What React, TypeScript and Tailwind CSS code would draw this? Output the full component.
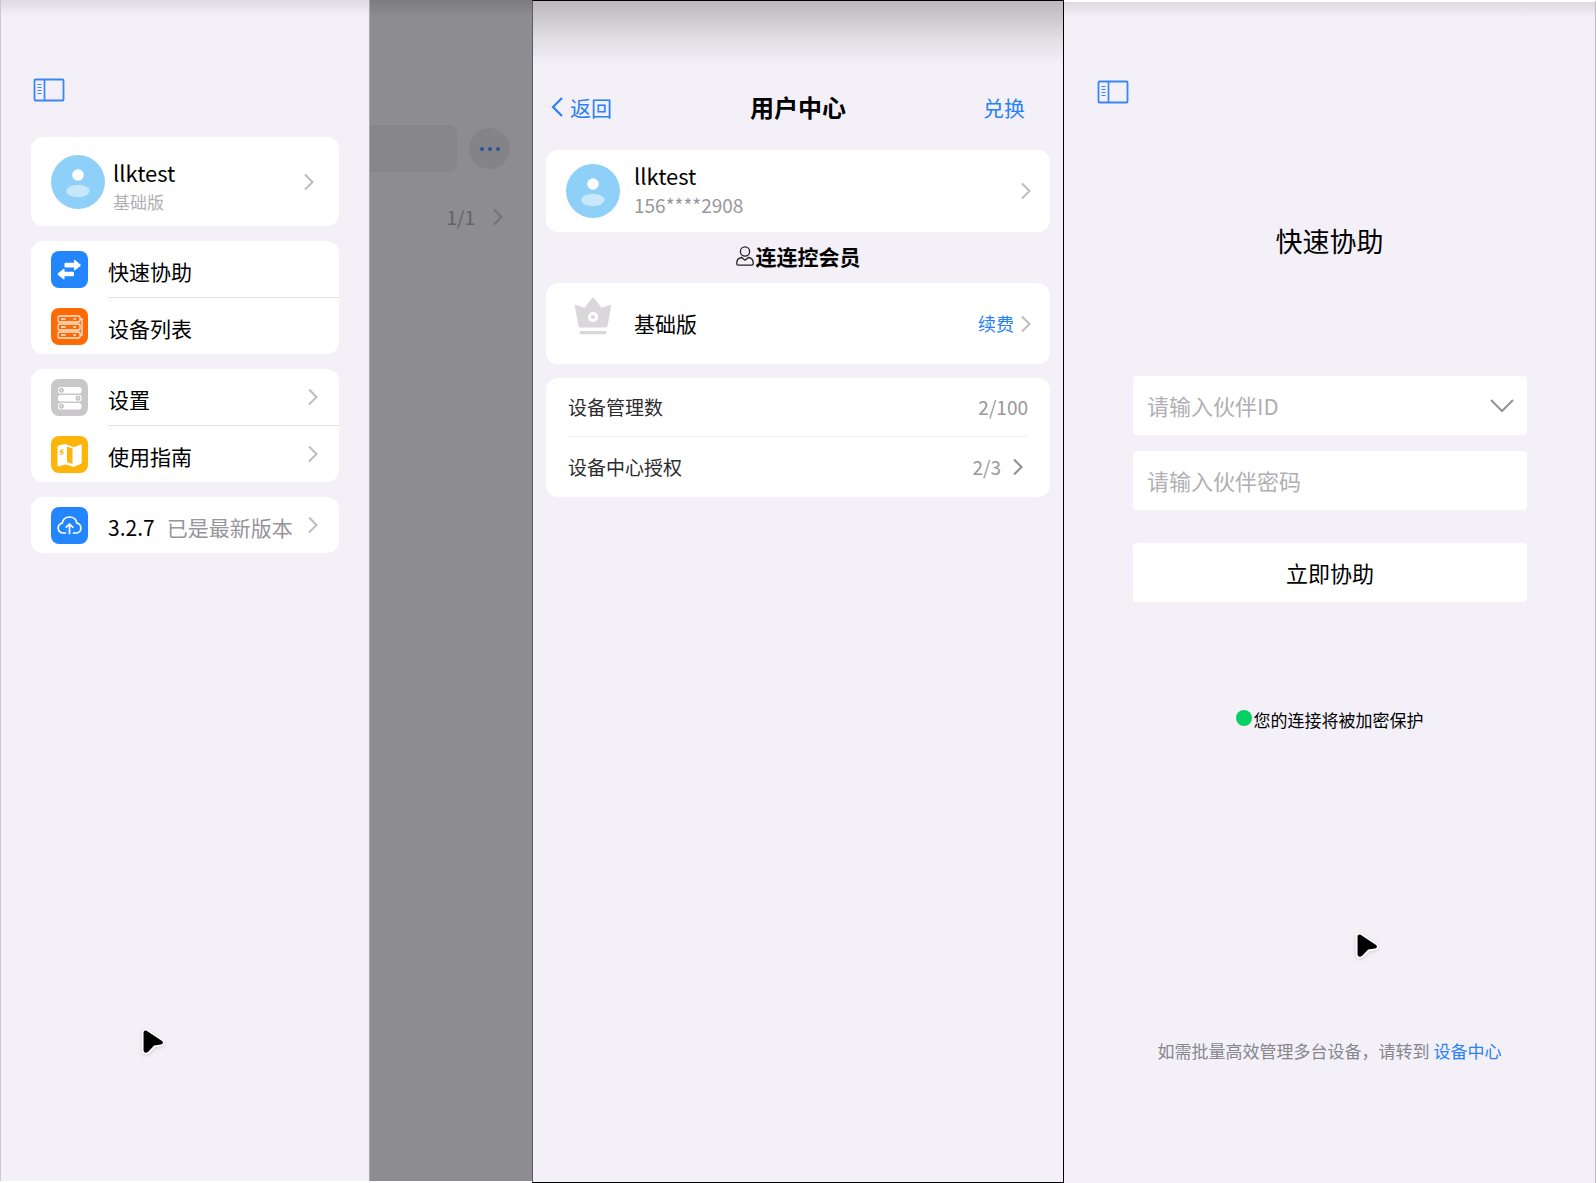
import type { ReactNode } from 'react';

function ChevronRight({ className = 'text-[#bcbbbf]' }: { className?: string }) {
  return (
    <svg className={`h-[18px] w-[12px] shrink-0 ${className}`} viewBox="0 0 12 18" fill="none" stroke="currentColor" strokeWidth="2" aria-hidden="true">
      <path d="M2 1.5 L9.5 9 L2 16.5" />
    </svg>
  );
}

function SidebarIcon() {
  return (
    <svg className="h-[24px] w-[32px]" viewBox="0 0 32 24" fill="none" stroke="#3a86f5" aria-hidden="true">
      <rect x="1.5" y="1.5" width="29" height="21" rx="1" strokeWidth="1.8" />
      <path d="M11.5 2v20" strokeWidth="1.7" />
      <path d="M4.5 6.5h4M4.5 9.5h4M4.5 12.5h4M4.5 15.5h4" strokeWidth="1.2" />
    </svg>
  );
}

function Avatar() {
  return (
    <svg className="h-[54px] w-[54px] shrink-0" viewBox="0 0 54 54" aria-hidden="true">
      <circle cx="27" cy="27" r="27" fill="#8fd0f8" />
      <circle cx="27" cy="20" r="5.8" fill="#fff" />
      <ellipse cx="27" cy="36" rx="11.5" ry="6.2" fill="#c6e7fc" />
    </svg>
  );
}

function Pointer() {
  return (
    <svg className="h-[31px] w-[29px] drop-shadow" viewBox="0 0 26 28" aria-hidden="true">
      <path
        d="M4 5.2c0-1.8 1.6-2.6 3.1-1.7L20.4 12.5c1.9 1.3 1.3 3-.8 3.3l-6 .9-5.4 5.6C6.4 23.9 4 23.4 4 21Z"
        fill="#fff"
        stroke="#fff"
        strokeWidth="3"
      />
      <path d="M4 5.2c0-1.8 1.6-2.6 3.1-1.7L20.4 12.5c1.9 1.3 1.3 3-.8 3.3l-6 .9-5.4 5.6C6.4 23.9 4 23.4 4 21Z" />
    </svg>
  );
}

function SwapIcon() {
  return (
    <svg className="h-[37px] w-[37px]" viewBox="0 0 37 37" fill="#fff" aria-hidden="true">
      <path d="M14.5 11.8h8.5v-2.2q0-1.2 1-.5l5.4 4.3q.8.8 0 1.6L24 19.3q-1 .7-1-.5v-2.4h-8.5q-1 0-1-1v-2.6q0-1 1-1z" />
      <path d="M22 20.7h-8.5v-2.2q0-1.2-1-.5L7 22.3q-.8.8 0 1.6l5.5 4.3q1 .7 1-.5v-2.4H22q1 0 1-1v-2.6q0-1-1-1z" />
    </svg>
  );
}

function DevicesIcon() {
  return (
    <svg className="h-[37px] w-[37px]" viewBox="0 0 37 37" fill="none" stroke="#ffe9da" strokeWidth="1.3" aria-hidden="true">
      {[8, 16, 24].map((y) => (
        <g key={y}>
          <rect x="7" y={y} width="22" height="6" rx="1.5" />
          <path d={`M10 ${y + 3}h4.5M22.5 ${y + 3}h2.5`} />
        </g>
      ))}
      <path d="M29 11h2v16h-2" />
    </svg>
  );
}

function SettingsIcon() {
  return (
    <svg className="h-[37px] w-[37px]" viewBox="0 0 37 37" aria-hidden="true">
      {[
        { y: 8, knob: 10.5 },
        { y: 16, knob: 27 },
        { y: 24, knob: 10.5 },
      ].map(({ y, knob }) => (
        <g key={y}>
          <rect x="7" y={y} width="23.5" height="6.5" rx="2.5" fill="#fff" />
          <circle cx={knob} cy={y + 3.25} r="2" fill="#dedcde" stroke="#b7b5b8" />
        </g>
      ))}
    </svg>
  );
}

function MapIcon() {
  return (
    <svg className="h-[37px] w-[37px]" viewBox="0 0 37 37" aria-hidden="true">
      <path d="M6.5 11q0-1 1-1.4L14 8l9 3.2 6.500-2.7q1.2-.4 1.2.8V26.5q0 .8-.8 1.200L23 31l-8.500-2.600-6.700 1.900q-1.300.3-1.300-1z" fill="#fff" />
      <path d="M16 10.500l5.500 2v15.500l-5.500-2z" fill="#fdb50b" />
      <path d="M9 14.500l3.500-1M9 18.500l3.500-1M9.700 14.500v1.700l2.100-.4v2" fill="none" stroke="#fdb50b" strokeWidth="1.200" />
    </svg>
  );
}

function CloudIcon() {
  return (
    <svg className="h-[37px] w-[37px]" viewBox="0 0 37 37" fill="none" stroke="#fff" strokeWidth="1.7" strokeLinecap="round" aria-hidden="true">
      <path d="M14.5 26H12a5 5 0 0 1-.8-9.9C12 12 15 10 18.6 10s6.5 2.2 7.3 6.1A5 5 0 0 1 25 26h-2.5" />
      <path d="M18.5 26.5v-9M15.2 20.2l3.3-3 3.3 3" />
    </svg>
  );
}

function CrownIcon() {
  return (
    <svg className="h-[38px] w-[38px]" viewBox="0 0 38 38" fill="#d9d7da" aria-hidden="true">
      <path d="M.7 8.5q-.2-1.2 1-.7l8.8 2.9L18 1q1-1.2 2 0l7.5 9.7 8.8-2.9q1.2-.5 1 .7L33.5 29q-.2 1.5-1.7 1.5H6.2q-1.5 0-1.7-1.5z" />
      <circle cx="19" cy="20" r="3.6" fill="none" stroke="#fff" strokeWidth="3" />
      <rect x="5.5" y="34" width="27" height="3.2" rx="1.6" />
    </svg>
  );
}

function MemberIcon() {
  return (
    <svg className="h-[20px] w-[18px]" viewBox="0 0 18 20" fill="none" stroke="#222" strokeWidth="1.3" aria-hidden="true">
      <circle cx="9" cy="5.5" r="4.6" />
      <path d="M5.5 11.5C2.5 12 .8 14 .8 17v.8q0 1.4 1.4 1.4h13.6q1.4 0 1.4-1.4V17c0-3-1.7-5-4.7-5.5L9 14.2z" />
    </svg>
  );
}

function MenuRow({ icon, color, chevron, divider, children }: {
  icon: ReactNode;
  color: string;
  chevron?: boolean;
  divider?: boolean;
  children: ReactNode;
}) {
  return (
    <button type="button" className={`flex w-full items-center gap-5 pl-5 text-left text-[21px] ${divider ? 'h-[57px]' : 'h-14'}`}>
      <span className={`h-[37px] w-[37px] shrink-0 rounded-lg ${color}`}>{icon}</span>
      <span className={`flex h-full flex-1 items-center justify-between pr-5 ${divider ? 'border-b border-[#e2e1e5]' : ''}`}>
        <span className="pt-[3px]">{children}</span>
        {chevron && <ChevronRight />}
      </span>
    </button>
  );
}

function MenuScreen() {
  return (
    <section className="flex border-b-2 border-white bg-[#8d8c90]">
      <nav className="w-[369px] shrink-0 border-l border-[#c9c8cc] bg-[#f3f0f8] bg-linear-to-b from-[#dddbe1] to-[#f3f0f8] to-[16px] px-[30px] pt-[78px]">
        <button type="button" className="block pl-[2px]" aria-label="菜单">
          <SidebarIcon />
        </button>
        <div className="mt-[35px] flex flex-col gap-[15px] leading-8">
          <button type="button" className="flex h-[89px] w-full items-center gap-2 rounded-xl bg-white pr-6 pl-5 text-left">
            <Avatar />
            <span className="flex-1 pt-[9px]">
              <span className="block text-[22px]">llktest</span>
              <span className="block text-[17px] leading-7 text-[#b0afb3]">基础版</span>
            </span>
            <ChevronRight />
          </button>
          <div className="rounded-xl bg-white">
            <MenuRow icon={<SwapIcon />} color="bg-[#2386fe]" divider>快速协助</MenuRow>
            <MenuRow icon={<DevicesIcon />} color="bg-[#fe6a05]">设备列表</MenuRow>
          </div>
          <div className="rounded-xl bg-white">
            <MenuRow icon={<SettingsIcon />} color="bg-[#c9c7ca]" divider chevron>设置</MenuRow>
            <MenuRow icon={<MapIcon />} color="bg-[#fdb50b]" chevron>使用指南</MenuRow>
          </div>
          <div className="rounded-xl bg-white">
            <MenuRow icon={<CloudIcon />} color="bg-[#2386fe]" chevron>
              3.2.7<span className="ml-3 text-[#96959a]">已是最新版本</span>
            </MenuRow>
          </div>
        </div>
        <div className="mt-[474px] pl-[108px]">
          <Pointer />
        </div>
      </nav>
      <div className="flex-1 border-l border-[#a9a8ac] bg-linear-to-b from-[#7c7b7f] to-[#8d8c90] to-[16px] pt-[125px]">
        <div className="flex items-center gap-3">
          <div className="h-[47px] flex-1 rounded-r-lg bg-[#868589]" />
          <button type="button" className="mr-[22px] flex h-[41px] w-[41px] items-center justify-center gap-1 rounded-full bg-[#848387]" aria-label="更多">
            <span className="h-1 w-1 rounded-full bg-[#2a559d]" />
            <span className="h-1 w-1 rounded-full bg-[#2a559d]" />
            <span className="h-1 w-1 rounded-full bg-[#2a559d]" />
          </button>
        </div>
        <div className="mt-[31px] flex items-center justify-end gap-[17px] pr-[28px] text-[19px] leading-7 text-[#646367]">
          <span>1/1</span>
          <ChevronRight className="text-[#737276]" />
        </div>
      </div>
    </section>
  );
}

function UserCenterScreen() {
  return (
    <section className="border border-black border-l-[#5c5b5f] bg-[#f3f0f8] bg-linear-to-b from-[#bcb8bb] via-[#dfdde1] via-[36px] to-[#f3f0f8] to-[64px] px-[13px] pt-[90px]">
      <header className="grid grid-cols-3 items-center px-[5px] leading-8">
        <button type="button" className="flex items-center gap-[7px] text-[21px] text-[#2a80f6]">
          <svg className="h-[20px] w-[12px]" viewBox="0 0 12 20" fill="none" stroke="currentColor" strokeWidth="2.2" aria-hidden="true">
            <path d="M11 1 L2 10 L11 19" />
          </svg>
          返回
        </button>
        <h1 className="text-center text-[24px] font-bold">用户中心</h1>
        <button type="button" className="justify-self-end pr-[20px] text-[21px] text-[#2a80f6]">兑换</button>
      </header>

      <button type="button" className="mt-[27px] flex h-[82px] w-full items-center gap-[14px] rounded-xl bg-white pr-[18px] pl-5 text-left">
        <Avatar />
        <span className="flex-1 pb-1">
          <span className="block text-[22px] leading-8">llktest</span>
          <span className="block text-[19px] leading-7 text-[#98979b]">156****2908</span>
        </span>
        <ChevronRight />
      </button>

      <h2 className="mt-2 flex items-center justify-center text-[21px] leading-8 font-bold">
        <MemberIcon />
        <span className="ml-[2px]">连连控会员</span>
      </h2>

      <div className="mt-[11px] flex h-[81px] items-center rounded-xl bg-white pr-[18px] pl-7">
        <div className="mb-4">
          <CrownIcon />
        </div>
        <span className="ml-[22px] flex-1 text-[21px]">基础版</span>
        <button type="button" className="flex items-center gap-[6px] text-[18px] text-[#2a80f6]">
          续费
          <ChevronRight />
        </button>
      </div>

      <div className="mt-[14px] rounded-xl bg-white px-[22px] text-[19px] leading-7">
        <div className="flex h-[59px] items-center justify-between border-b border-[#f3f1f5] text-[#98979b]">
          <span className="text-[#2c2b2e]">设备管理数</span>
          <span>2/100</span>
        </div>
        <button type="button" className="flex h-[60px] w-full items-center pr-[4px] text-[#98979b]">
          <span className="flex-1 text-left text-[#2c2b2e]">设备中心授权</span>
          <span className="mr-[11px]">2/3</span>
          <ChevronRight className="text-[#8f8e92]" />
        </button>
      </div>
    </section>
  );
}

function QuickAssistScreen() {
  return (
    <section className="border-t-2 border-r border-t-white border-r-[#bdbcc0] bg-[#f3f0f8] bg-linear-to-b from-[#dddbe1] to-[#f3f0f8] to-[16px] pt-[78px]">
      <button type="button" className="ml-[33px] block" aria-label="菜单">
        <SidebarIcon />
      </button>
      <h1 className="mt-[117px] text-center text-[27px] leading-10">快速协助</h1>

      <form className="mt-[115px] pr-[68px] pl-[69px] text-[22px] leading-8" onSubmit={(e) => e.preventDefault()}>
        <label className="flex h-[59px] items-center rounded bg-white pr-[13px] pl-[14px]">
          <input
            type="text"
            aria-label="伙伴ID"
            placeholder="请输入伙伴ID"
            className="w-full min-w-0 flex-1 pb-[2px] outline-none placeholder:text-[#b0afb3]"
          />
          <svg className="h-[14px] w-[24px] shrink-0" viewBox="0 0 24 14" fill="none" stroke="#949397" strokeWidth="2" aria-hidden="true">
            <path d="M1 1 L12 12 L23 1" />
          </svg>
        </label>
        <input
          type="password"
          aria-label="伙伴密码"
          placeholder="请输入伙伴密码"
          className="mt-4 block h-[59px] w-full rounded bg-white px-[14px] pb-[2px] outline-none placeholder:text-[#b0afb3]"
        />
        <button type="submit" className="mt-[33px] block h-[59px] w-full rounded bg-white pb-[2px]">立即协助</button>
      </form>

      <p className="mt-[102px] flex items-center justify-center gap-[2px] text-[17px] leading-8">
        <span className="mb-1 h-4 w-4 rounded-full bg-[#05cf65]" />
        您的连接将被加密保护
      </p>

      <div className="mt-[195px] pl-[289px]">
        <Pointer />
      </div>

      <p className="mt-[73px] text-center text-[17px] leading-8 text-[#87868a]">
        如需批量高效管理多台设备，请转到{' '}
        <a href="#devices" className="text-[#2a80f6]">设备中心</a>
      </p>
    </section>
  );
}

export default function App() {
  return (
    <main className='grid min-h-screen grid-cols-3 font-["Noto_Sans_CJK_SC",sans-serif] text-black'>
      <MenuScreen />
      <UserCenterScreen />
      <QuickAssistScreen />
    </main>
  );
}
